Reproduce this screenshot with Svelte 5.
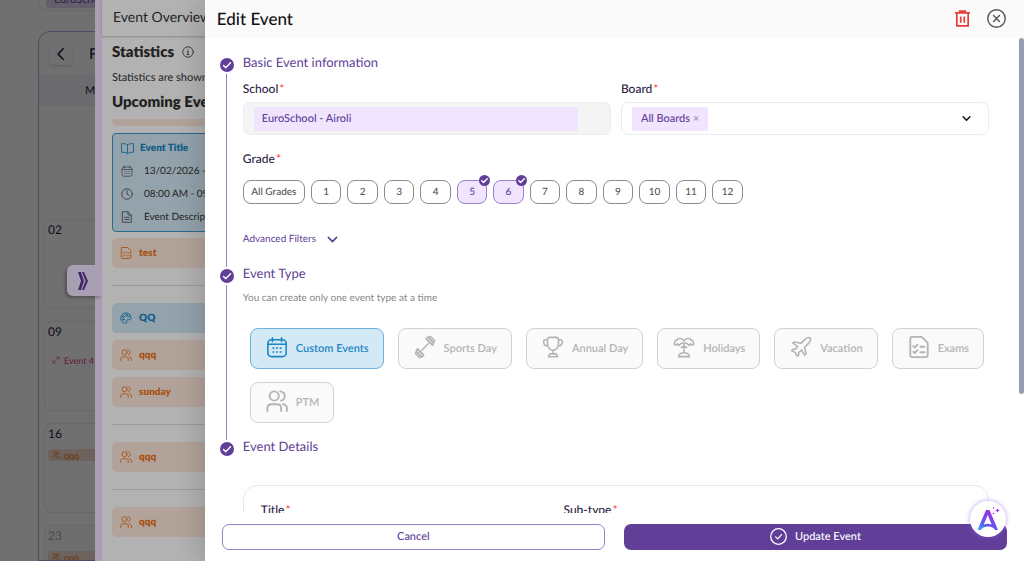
<script lang="ts">
	type EventType = { id: string; label: string; icon: string };

	const grades = Array.from({ length: 12 }, (_, i) => i + 1);
	let selectedGrades = $state<number[]>([5, 6]);

	const eventTypes: EventType[] = [
		{ id: 'custom', label: 'Custom Events', icon: 'calendar' },
		{ id: 'sports', label: 'Sports Day', icon: 'dumbbell' },
		{ id: 'annual', label: 'Annual Day', icon: 'trophy' },
		{ id: 'holidays', label: 'Holidays', icon: 'palm' },
		{ id: 'vacation', label: 'Vacation', icon: 'plane' },
		{ id: 'exams', label: 'Exams', icon: 'exam' },
		{ id: 'ptm', label: 'PTM', icon: 'users' }
	];
	let activeType = $state('custom');

	let boards = $state(['All Boards']);
	let school = $state('EuroSchool - Airoli');
	let title = $state('');
	let subType = $state('');

	// one group per day, groups are split by a divider
	const upcoming = [
		[{ name: 'test', icon: 'exam', tone: 'orange' }],
		[
			{ name: 'QQ', icon: 'palette', tone: 'blue' },
			{ name: 'qqq', icon: 'users', tone: 'orange' },
			{ name: 'sunday', icon: 'users', tone: 'orange' }
		],
		[{ name: 'qqq', icon: 'users', tone: 'orange' }],
		[{ name: 'qqq', icon: 'users', tone: 'orange' }]
	];

	const mondays = [
		{ day: '02' },
		{ day: '09', event: 'Event 4', icon: 'expand', tone: 'pink' },
		{ day: '16', event: 'qqq', icon: 'users', tone: 'orange' },
		{ day: '23', event: 'qqq', icon: 'users', tone: 'orange', faded: true }
	];

	function toggleGrade(grade: number) {
		selectedGrades = selectedGrades.includes(grade)
			? selectedGrades.filter((g) => g !== grade)
			: [...selectedGrades, grade];
	}
</script>

{#snippet icon(name: string, size: number, stroke = 1.6)}
	<svg
		width={size}
		height={size}
		viewBox="0 0 24 24"
		fill="none"
		stroke="currentColor"
		stroke-width={stroke}
		stroke-linecap="round"
		stroke-linejoin="round"
		aria-hidden="true"
	>
		{#if name === 'calendar'}
			<rect x="2" y="4" width="20" height="18.500" rx="4" />
			<path d="M2 9h20M7 2v4M17 2v4" />
			<path d="M7.700 13.200h.8M11.600 13.200h.8M15.600 13.200h.8M7.700 17.400h.8M11.600 17.400h.8M15.600 17.400h.8" />
		{:else if name === 'dumbbell'}
			<path d="M8.500 15.500l7-7M14 3.500l6.500 6.500M3.500 14l6.500 6.500" />
			<rect x="12.800" y="3.800" width="9.500" height="3" rx="1" transform="rotate(45 17.500 5.300)" />
			<rect x="15.800" y="2.200" width="7" height="2.600" rx="1" transform="rotate(45 19.300 3.500)" />
			<rect x="1.700" y="17.200" width="9.500" height="3" rx="1" transform="rotate(45 6.500 18.700)" />
			<rect x="1.200" y="19.200" width="7" height="2.600" rx="1" transform="rotate(45 4.700 20.500)" />
		{:else if name === 'trophy'}
			<path d="M6 4q0-2.500 2.500-2.500h7Q18 1.500 18 4v4c0 4.500-2.500 7.500-6 7.500S6 12.500 6 8zM6 4H4Q1.800 4 1.800 6C1.800 9 3.500 11 6.500 11M18 4h2q2.200 0 2.200 2c0 3-1.700 5-4.700 5M12 15.500v4M8.500 19.500h7l1.500 3.200H7z" />
		{:else if name === 'palm'}
			<path d="M12 5.500C10 2 5.500 2 4 4.500 1.500 5 1 8 2 10l3-1.500 1 2 3-2.500h6l3 2.500 1-2 3 1.500c1-2 .5-5-2-5.500C18.500 2 14 2 12 5.500zM12 8.500V18M6 22.500c.5-3 2.500-4.300 6-4.300s5.500 1.300 6 4.300zM9 12.500l3-1.500 3 1.500" />
		{:else if name === 'plane'}
			<path d="M17.600 19.200L15.800 12.500 20 8.300C21.500 6.800 23 4 22.200 2.200 20.500 1 17.500 2.500 16 4L12 8 5 6.500c-.9-.1-1.500.3-2 1l5.500 4L6 14.500H3L1.800 15.800l4 2.300 2.300 4L9.500 21v-3l3-2.700 3.500 5.500z" />
		{:else if name === 'exam'}
			<path d="M4.500 1H15l6.500 6.500V21q0 2-2 2h-15q-2 0-2-2V3q0-2 2-2z" />
			<path d="M5.800 11.200l1.500 1.500 3-3.300M13.500 11.700H18M5.800 17.200l1.500 1.500 3-3.300M13.500 17.700H18" />
		{:else if name === 'users'}
			<circle cx="9" cy="6.500" r="5" />
			<path d="M1.500 23v-3c0-3 2-4.500 4.500-4.500h6c2.500 0 4.500 1.500 4.500 4.500v3M15.500 1.500c3.500.5 5 2.500 5 5s-1.500 4.500-4 5M18.500 15.500c3 .5 4.300 2 4.300 4.500v3" />
		{:else if name === 'palette'}
			<path d="M21.500 10C20.500 5 17 2 12 2 6 2 1.500 6.500 1.500 12.500 1.500 18.500 6 22.500 11 22.500c2 0 3-1 2.500-2.500-.8-3 0-4.500 3-4.500h2.500c2.500-.5 3.500-2.500 2.500-5.500z" />
			<circle cx="7" cy="9" r="1.700" /><circle cx="13" cy="6.500" r="1.700" /><circle cx="6.500" cy="15" r="1.700" /><path d="M16 11l4-5" />
		{:else if name === 'book'}
			<path d="M12 5.500C10 3.500 6.500 3 1 3v16c5 0 9 .5 11 2.500 2-2 6-2.500 11-2.500V3c-5.500 0-9 .5-11 2.500zM12 5.500v16" />
		{:else if name === 'clock'}
			<circle cx="12" cy="12" r="10.500" /><path d="M12 5.500V12l4 3" />
		{:else if name === 'file'}
			<path d="M3.500 1.500H14L20.500 8v14.500h-17zM14 1.500V8h6.500M7.500 12.500h9M7.500 17h9" />
		{:else if name === 'expand'}
			<path d="M14 3h7v7M21 3l-7 7M10 21H3v-7M3 21l7-7" />
		{:else if name === 'info'}
			<circle cx="12" cy="12" r="10.500" /><path d="M12 11v6M12 7v.5M10.500 11H12M10 17h4" />
		{:else if name === 'back'}
			<path d="M15.500 3L7 12l8.500 9" />
		{:else if name === 'down'}
			<path d="M3 7.500l9 9 9-9" />
		{:else if name === 'trash'}
			<path d="M1.500 4h21M8 3.500V1.500h8v2M4 4.500v18h16v-18M9.500 9v9M14.500 9v9" stroke-linecap="butt" stroke-linejoin="miter" />
		{:else if name === 'close'}
			<circle cx="12" cy="12" r="11" /><path d="M8.300 8.300l7.400 7.400M15.700 8.300l-7.400 7.400" />
		{:else if name === 'done'}
			<circle cx="12" cy="12" r="11" /><path d="M8 12.500l2.800 2.800 5.500-6" />
		{:else if name === 'tick'}
			<circle cx="12" cy="12" r="12" fill="currentColor" stroke="none" /><path d="M6 12.700l4 3.800 8-8.500" stroke="#fff" />
		{/if}
	</svg>
{/snippet}

<div class="app">
	<main class="calendar-page">
		<div class="school-bar"><span>EuroSchool</span></div>
		<section class="calendar">
			<header>
				<button class="back" aria-label="Previous month">{@render icon('back', 14, 3)}</button>
				<h2>February</h2>
			</header>
			<div class="weekday">MON</div>
			<div class="days">
				{#each mondays as cell (cell.day)}
					<div class="day" class:faded={cell.faded}>
						<span class="num">{cell.day}</span>
						{#if cell.event}
							<span class="mini {cell.tone}">{@render icon(cell.icon, 8, 2)}{cell.event}</span>
						{/if}
					</div>
				{/each}
			</div>
		</section>
	</main>
	<div class="dim"></div>

	<aside class="overview">
		<button class="handle" aria-label="Collapse panel">
			<svg width="10" height="18" viewBox="0 0 10 18" aria-hidden="true">
				<path d="M0 0h3l3 9-3 9H0l3-9zM4 0h2l4 9-4 9H4l3.500-9z" fill="#5f3d98" />
			</svg>
		</button>
		<header>Event Overview</header>
		<div class="overview-body">
			<h2>Statistics {@render icon('info', 12, 1.600)}</h2>
			<p>Statistics are shown for the month</p>
			<h2>Upcoming Events</h2>
			<div class="strip"></div>
			<article class="event-card">
				<h3>{@render icon('book', 13)} Event Title</h3>
				<div>{@render icon('calendar', 12)} 13/02/2026 - 13/02/2026</div>
				<div>{@render icon('clock', 12, 2)} 08:00 AM - 09:00 AM</div>
				<div>{@render icon('file', 12, 2)} Event Description</div>
			</article>
			{#each upcoming as group}
				<div class="group">
					{#each group as item}
						<div class="item {item.tone}">{@render icon(item.icon, 12, 1.800)}{item.name}</div>
					{/each}
				</div>
			{/each}
		</div>
	</aside>
	<div class="dim second"></div>

	<section class="drawer" aria-label="Edit Event">
		<header class="drawer-head">
			<h1>Edit Event</h1>
			<button class="delete" aria-label="Delete event">{@render icon('trash', 17, 2.400)}</button>
			<button class="close" aria-label="Close">{@render icon('close', 19, 1.800)}</button>
		</header>

		<div class="drawer-body">
			<div class="thumb"></div>

			<div class="step">
				<div class="rail">{@render icon('tick', 14, 2.500)}<i></i></div>
				<div class="content">
					<h2>Basic Event information</h2>
					<div class="fields">
						<div>
							<label for="school">School<b>*</b></label>
							<div class="box disabled">
								<input id="school" type="text" readonly bind:value={school} />
							</div>
						</div>
						<div>
							<label for="board">Board<b>*</b></label>
							<div class="box">
								{#each boards as board}
									<span class="tag">
										{board}
										<button aria-label="Remove {board}" onclick={() => (boards = [])}>×</button>
									</span>
								{/each}
								<button id="board" class="open" aria-label="Choose boards">{@render icon('down', 9, 4)}</button>
							</div>
						</div>
					</div>
					<div class="label" id="grade-label">Grade<b>*</b></div>
					<div class="grades" role="group" aria-labelledby="grade-label">
						<button onclick={() => (selectedGrades = [...grades])}>All Grades</button>
						{#each grades as grade (grade)}
							<button
								class:selected={selectedGrades.includes(grade)}
								aria-pressed={selectedGrades.includes(grade)}
								onclick={() => toggleGrade(grade)}
							>
								{grade}
								{#if selectedGrades.includes(grade)}
									<span class="badge">{@render icon('tick', 11, 3)}</span>
								{/if}
							</button>
						{/each}
					</div>
					<button class="advanced">Advanced Filters {@render icon('down', 11, 3.500)}</button>
				</div>
			</div>

			<div class="step second">
				<div class="rail">{@render icon('tick', 14, 2.500)}<i></i></div>
				<div class="content">
					<h2>Event Type</h2>
					<p class="hint">You can create only one event type at a time</p>
					<div class="types">
						{#each eventTypes as type (type.id)}
							<button
								class:active={activeType === type.id}
								aria-pressed={activeType === type.id}
								onclick={() => (activeType = type.id)}
							>
								{@render icon(type.icon, 22, type.icon === 'exam' || type.icon === 'users' ? 2 : 1.700)}
								<span>{type.label}</span>
							</button>
						{/each}
					</div>
				</div>
			</div>

			<div class="step third">
				<div class="rail">{@render icon('tick', 14, 2.500)}</div>
				<div class="content">
					<h2>Event Details</h2>
					<div class="details">
						<div>
							<label for="title">Title<b>*</b></label>
							<input id="title" type="text" bind:value={title} />
						</div>
						<div>
							<label for="sub-type">Sub-type<b>*</b></label>
							<input id="sub-type" type="text" bind:value={subType} />
						</div>
					</div>
				</div>
			</div>
		</div>

		<footer>
			<button class="cancel">Cancel</button>
			<button class="update">{@render icon('done', 17, 1.800)} Update Event</button>
		</footer>

		<button class="assistant" aria-label="Assistant">
			<svg width="24" height="24" viewBox="0 0 24 24" aria-hidden="true">
				<defs>
					<linearGradient id="assist" x1="0" y1="1" x2="0.600" y2="0">
						<stop offset="0" stop-color="#35b8f5" />
						<stop offset="0.350" stop-color="#5b5cf0" />
						<stop offset="1" stop-color="#a52be0" />
					</linearGradient>
				</defs>
				<path
					d="M10 3h3.500L22 23h-3c-1-2-3.500-3.500-7-3.500S6 21 5 23H1.500zM11.700 8L7.700 17.700c2.500-1.200 5.500-1.200 8 0z"
					fill="url(#assist)"
					fill-rule="evenodd"
				/>
				<path d="M21.500 1.200l.7 1.600 1.600.7-1.600.7-.7 1.600-.7-1.600-1.600-.7 1.600-.7z" fill="#a52be0" />
				<circle cx="17.500" cy="1" r="0.800" fill="#a52be0" />
				<circle cx="17.500" cy="6.500" r="0.800" fill="#a52be0" />
			</svg>
		</button>
	</section>
</div>

<style>
	:global(body) {
		margin: 0;
		overflow: hidden;
	}

	.app {
		position: relative;
		height: 100vh;
		overflow: hidden;
		background: #fff;
		font-family: 'Lato', 'Open Sans', sans-serif;
		font-size: 11px;
		color: #2d2346;
		text-rendering: geometricPrecision;
	}

	h1, h2, h3, p {
		margin: 0;
		font-weight: 500;
	}

	button {
		margin: 0;
		padding: 0;
		border: 0;
		background: none;
		color: inherit;
		font: inherit;
		text-rendering: inherit;
		cursor: pointer;
	}

	svg {
		display: block;
		flex: none;
		overflow: visible;
	}

	.dim {
		position: absolute;
		inset: 0;
		background: rgba(0, 0, 0, 0.37);
	}

	.dim.second {
		background: rgba(0, 0, 0, 0.3);
	}

	/* calendar behind the panels */
	.calendar-page {
		display: flex;
		flex-direction: column;
		height: 100%;
		padding-left: 38px;
	}

	.school-bar {
		flex: none;
		height: 11px;
		box-sizing: border-box;
		padding: 0 7px 3px;
		border: 1px solid #eeeaf5;
		border-top: 0;
		border-radius: 0 0 8px 8px;
	}

	.school-bar span {
		display: block;
		height: 8px;
		padding-left: 8px;
		border-radius: 0 0 4px 4px;
		background: #e4d6f5;
		color: #6b46a8;
		line-height: 0;
	}

	.calendar {
		flex: 1;
		margin-top: 20px;
		border: 1px solid #b5a9e0;
		border-radius: 12px 0 0 0;
		overflow: hidden;
	}

	.calendar header {
		display: flex;
		align-items: center;
		gap: 17px;
		height: 43px;
		padding-left: 11px;
	}

	.calendar h2 {
		font-size: 15px;
	}

	.back {
		display: grid;
		place-items: center;
		width: 22px;
		height: 22px;
		border-radius: 4px;
		box-shadow: 0 1px 3px #d3c5ee;
	}

	.weekday {
		width: 118px;
		height: 31px;
		box-sizing: border-box;
		padding-left: 46px;
		background: #f4f2f8;
		line-height: 31px;
	}

	.days {
		display: grid;
		gap: 12px;
		padding: 113px 0 0 5px;
	}

	.day {
		display: flex;
		flex-direction: column;
		align-items: stretch;
		gap: 8px;
		width: 108px;
		height: 90px;
		box-sizing: border-box;
		padding: 3px;
		border: 1px solid #ececf0;
		border-radius: 8px;
	}

	.num {
		font-size: 12px;
		line-height: 14px;
	}

	.faded .num {
		color: #aaa;
	}

	.faded {
		background: #fafafa;
	}

	.mini {
		display: flex;
		align-items: center;
		gap: 4px;
		height: 12px;
		padding-left: 4px;
		border-radius: 4px;
		font-size: 9px;
	}

	.day .pink {
		margin-top: 7px;
		color: #e0408c;
	}

	.mini.orange {
		background: #f9e2d3;
	}

	.orange {
		background: #ffeadd;
		color: #ef7620;
	}

	/* event overview panel */
	.overview {
		position: absolute;
		inset: 0 0 0 95px;
		border-left: 7px solid #f1e4ff;
		background: #fff;
		color: #333;
	}

	.overview header {
		height: 36px;
		padding-left: 11px;
		box-shadow: 0 1px 2px rgba(0, 0, 0, 0.25);
		font-size: 14px;
		line-height: 34px;
	}

	.handle {
		position: absolute;
		top: 265px;
		left: -35px;
		display: grid;
		place-items: center;
		width: 35px;
		height: 31px;
		box-sizing: border-box;
		padding-right: 4px;
		border-radius: 6px 0 0 6px;
		background: #f1e4ff;
		box-shadow: -2px 2px 3px rgba(0, 0, 0, 0.25);
	}

	.overview-body {
		padding: 7px 10px 0;
	}

	.overview h2 {
		display: flex;
		align-items: center;
		gap: 8px;
		font-size: 15px;
		font-weight: 800;
		line-height: 18px;
		white-space: nowrap;
	}

	.overview p {
		margin: 9px 0 7px;
		font-weight: 400;
		line-height: 16px;
	}

	.strip {
		height: 7px;
		margin: 8px 0 7px;
		border-radius: 0 0 5px 5px;
		background: #ffeadd;
	}

	.event-card {
		display: flex;
		flex-direction: column;
		justify-content: space-between;
		height: 99px;
		box-sizing: border-box;
		margin-bottom: 6px;
		padding: 6px 8px;
		border: 1px solid #3d97cc;
		border-radius: 4px;
		background: #d3e9f5;
		font-size: 10px;
		line-height: 16px;
	}

	.event-card div {
		display: flex;
		align-items: center;
		gap: 11px;
	}

	.event-card div :global(svg) {
		color: #666;
	}

	.event-card h3 {
		display: flex;
		align-items: center;
		gap: 6px;
		color: #1a86c4;
		font-size: 10px;
		font-weight: 800;
	}

	.group {
		display: grid;
		gap: 7px;
	}

	.group + .group {
		margin-top: 17px;
		padding-top: 17px;
		border-top: 1px solid #ddd;
	}

	.item {
		display: flex;
		align-items: center;
		gap: 7px;
		height: 30px;
		padding-left: 8px;
		border-radius: 5px;
		font-size: 10px;
		font-weight: 800;
	}

	.blue {
		background: #d3e9f5;
		color: #1a86c4;
	}

	/* edit drawer */
	.drawer {
		position: absolute;
		inset: 0 0 0 auto;
		display: flex;
		flex-direction: column;
		width: 80%;
		background: #fff;
		box-shadow: -6px 0 24px rgba(0, 0, 0, 0.15);
	}

	.drawer-head {
		flex: none;
		display: flex;
		align-items: center;
		gap: 16px;
		height: 38px;
		box-sizing: border-box;
		padding: 0 18px 1px 12px;
		background: #fafafa;
		color: #111;
	}

	h1 {
		flex: 1;
		font-size: 17px;
		line-height: 20px;
	}

	.delete {
		color: #e53e3e;
	}

	.close {
		color: #555;
	}

	.drawer-body {
		position: relative;
		flex: 1;
		min-height: 0;
		box-sizing: border-box;
		padding: 15px 35px 0 15px;
		overflow: hidden;
	}

	.thumb {
		position: absolute;
		top: 0;
		right: 0;
		width: 5px;
		height: 75%;
		border-radius: 3px;
		background: #989eb1;
	}

	.step {
		display: flex;
		gap: 9px;
	}

	.rail {
		display: flex;
		flex-direction: column;
		align-items: center;
		gap: 2px;
		width: 14px;
		padding-top: 5px;
		color: #613f98;
	}

	.rail i {
		flex: 1;
		width: 1px;
		margin-bottom: -3px;
		background: #9b80cb;
	}

	.content {
		flex: 1;
		min-width: 0;
		padding-bottom: 18px;
	}

	.step.second .content {
		padding-bottom: 14px;
	}

	.content h2 {
		color: #613f98;
		font-size: 13px;
		font-weight: 400;
		line-height: 18px;
	}

	.fields {
		display: grid;
		grid-template-columns: 1fr 1fr;
		gap: 10px;
		margin: 10px 0 16px;
	}

	label, .label {
		display: block;
		font-size: 12px;
		font-weight: 500;
		line-height: 16px;
	}

	label b, .label b {
		margin-left: 1px;
		color: #ff3b3b;
		font-weight: 400;
	}

	.box {
		display: flex;
		align-items: center;
		height: 33px;
		box-sizing: border-box;
		margin-top: 5px;
		padding: 0 17px 0 10px;
		border: 1px solid #e9ecf1;
		border-radius: 7px;
	}

	.disabled {
		padding-right: 32px;
		background: #f4f4f4;
	}

	.box input {
		width: 100%;
		height: 24px;
		box-sizing: border-box;
		padding: 0 8px;
		border: 0;
		border-radius: 2px;
		outline: 0;
		background: #f1e4ff;
		color: #613f98;
		font: inherit;
		font-weight: 500;
		text-rendering: inherit;
	}

	.tag {
		display: flex;
		align-items: center;
		gap: 3px;
		height: 24px;
		padding: 0 9px;
		border-radius: 2px;
		background: #f1e4ff;
		color: #613f98;
		font-weight: 500;
	}

	.tag button {
		color: #9a90ab;
	}

	.open {
		margin-left: auto;
		color: #111;
	}

	.grades {
		display: grid;
		grid-template-columns: 62px repeat(12, 1fr);
		gap: 6px;
		width: 67%;
		margin-top: 13px;
	}

	.grades button {
		position: relative;
		height: 24px;
		border: 1px solid #8c8c8c;
		border-radius: 8px;
		color: #555;
		font-size: 10px;
		font-weight: 500;
	}

	.grades .selected {
		border-color: #9b80cb;
		background: #f1e4ff;
		color: #613f98;
	}

	.badge {
		position: absolute;
		top: -6px;
		right: -4px;
		color: #613f98;
	}

	.advanced {
		display: flex;
		align-items: center;
		gap: 11px;
		margin-top: 28px;
		color: #613f98;
		font-size: 10px;
		line-height: 14px;
	}

	.hint {
		margin-top: 9px;
		color: #888;
		font-size: 10px;
		font-weight: 400;
		line-height: 14px;
	}

	.types {
		display: flex;
		flex-wrap: wrap;
		gap: 13px 14px;
		margin-top: 23px;
		padding-left: 7px;
	}

	.types button {
		display: flex;
		align-items: center;
		gap: 8px;
		height: 41px;
		padding: 0 14px 0 15px;
		border: 1px solid #d2d2d2;
		border-radius: 8px;
		background: #fafafa;
		color: #b4b4b4;
		font-weight: 600;
	}

	.types button :global(svg) {
		margin-bottom: 3px;
	}

	.types .active {
		border-color: #6db3dc;
		background: #d3e9f5;
		color: #1a86c4;
	}

	.details {
		display: grid;
		grid-template-columns: 2fr 3fr;
		gap: 31px;
		margin-top: 30px;
		padding: 16px 17px;
		border: 1px solid #e3e9f0;
		border-radius: 14px;
	}

	.details input {
		width: 100%;
		height: 33px;
		box-sizing: border-box;
		margin-top: 5px;
		border: 1px solid #e9ecf1;
		border-radius: 7px;
	}

	footer {
		flex: none;
		display: grid;
		grid-template-columns: 1fr 1fr;
		gap: 19px;
		padding: 11px 17px;
	}

	footer button {
		display: flex;
		align-items: center;
		justify-content: center;
		gap: 8px;
		height: 26px;
		padding-bottom: 1px;
		border-radius: 7px;
		font-weight: 500;
	}

	.cancel {
		border: 1px solid #9b80cb;
		color: #613f98;
	}

	.update {
		background: #613f98;
		color: #fff;
	}

	.assistant {
		position: absolute;
		right: 18px;
		bottom: 24px;
		display: grid;
		place-items: center;
		width: 36px;
		height: 36px;
		border-radius: 50%;
		background: #fff;
		box-shadow: 0 0 5px rgba(140, 90, 240, 0.6);
	}
</style>
